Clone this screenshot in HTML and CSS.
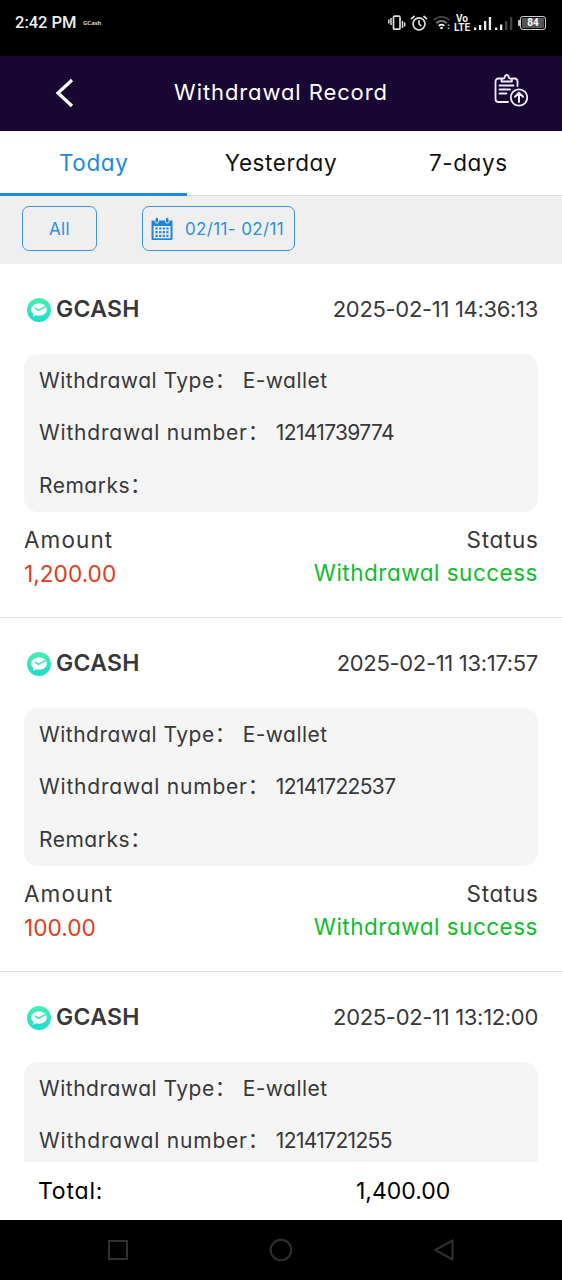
FILE: index.html
```html
<!DOCTYPE html>
<html lang="en">
<head>
    <meta charset="UTF-8">
    <meta name="viewport" content="width=device-width, initial-scale=1.0">
    <title>Withdrawal Record</title>
    <link rel="stylesheet" href="styles.css">
</head>
<body>
    <svg class="defs" width="0" height="0" aria-hidden="true">
        <defs>
            <linearGradient id="mint" x1="0" y1="0" x2="0" y2="1">
                <stop offset="0" stop-color="#45f0b0"/>
                <stop offset="1" stop-color="#1fdccb"/>
            </linearGradient>
            <symbol id="wallet" viewBox="0 0 26 26">
                <circle cx="13" cy="13" r="12" fill="url(#mint)"/>
                <path d="M13 6.500c4.400 0 7.800 2.500 7.800 6s-3.400 6.200-7.800 6.200c-1.100 0-2-.1-2.900-.4L7 19.700l.5-2.700c-1.500-1.100-2.300-2.700-2.300-4.500 0-3.500 3.400-6 7.800-6z" fill="#fff"/>
                <path d="M9 10.800l3.300 2.500 7.500-4" fill="none" stroke="#37e4b9" stroke-width="1.500"/>
            </symbol>
        </defs>
    </svg>

    <div class="statusbar">
        <span class="clock">2:42 PM</span>
        <span class="carrier">GCash</span>
        <div class="status-icons">
            <svg class="vibrate" width="18" height="16" viewBox="0 0 18 16" fill="none" stroke="#ddd">
                <rect x="5.500" y="1.200" width="6.500" height="13" rx="1" stroke-width="1.700"/>
                <path d="M.8 4.500v4M3 3v7M14.500 6v7M16.700 7.500v4" stroke-width="1.500"/>
            </svg>
            <svg class="alarm" width="18" height="16" viewBox="0 0 18 16" fill="none" stroke="#ddd" stroke-width="1.700">
                <circle cx="9" cy="8.800" r="6"/>
                <path d="M9 5.300V9l2.300 2.200M1 4.200L4.500 1M17 4.200L13.500 1"/>
            </svg>
            <svg class="wifi" width="18" height="16" viewBox="0 0 18 16" fill="none" stroke-width="1.700">
                <path d="M.8 5.200c4.300-4.500 11.200-4.500 15.500 0" stroke="#444"/>
                <path d="M3.300 8.200c3-3 7.600-3 10.500 0" stroke="#888"/>
                <path d="M5.800 10.800c1.700-1.500 3.800-1.500 5.500 0" stroke="#fff"/>
                <circle cx="8.500" cy="13" r="1.300" fill="#fff"/>
                <path d="M15.500 9.500v1.500M15.500 12.500v1.500" stroke="#aaa"/>
            </svg>
            <span class="volte"><span>Vo</span><span>LTE</span></span>
            <svg class="signal" width="40" height="16" viewBox="0 0 40 16">
                <path d="M1 12.500h2.300V15H1zM6 10h2.300v5H6zM11 6h2.300v9H11zM15.800 2h2.300v13h-2.300zM22 12.500h2.300V15H22zM27 9.500h2.300V15H27z" fill="#eee"/>
                <path d="M32 6h2.300v9H32zM37 2h2.300v13H37z" fill="#444"/>
            </svg>
            <span class="battery-tip"></span>
            <span class="battery">84</span>
        </div>
    </div>

    <div class="header">
        <svg class="back" width="20" height="30" viewBox="0 0 20 30" fill="none" stroke="#fff" stroke-width="3.200">
            <path d="M17 2L3 15l14 13"/>
        </svg>
        <h1 class="header-title">Withdrawal Record</h1>
        <svg class="clipboard" width="34" height="34" viewBox="0 0 34 34" fill="none" stroke="#f2eaff" stroke-width="1.800" stroke-linejoin="round" stroke-linecap="round">
            <path d="M8 5.500H4.500a3 3 0 0 0-3 3V26a3 3 0 0 0 3 3h9.500M18 5.500h2.500a3 3 0 0 1 3 3v4.500"/>
            <path d="M7.500 8.500V6.200l2.800-1c.4-2 1.200-3.400 2.400-3.400s2 1.400 2.400 3.400l2.800 1v2.300z"/>
            <path d="M5.500 12.500h14M5.500 16.500h10.500M5.500 20.500h7"/>
            <circle cx="25" cy="24.500" r="8.200"/>
            <path d="M25 29v-9M21 23.800l4-4 4 4" stroke-width="2"/>
        </svg>
    </div>

    <div class="tabs">
        <div class="tab active">Today</div>
        <div class="tab yesterday">Yesterday</div>
        <div class="tab week">7-days</div>
    </div>

    <div class="filters">
        <button class="filter-btn filter-all">All</button>
        <button class="filter-btn filter-date">
            <svg width="22" height="24" viewBox="0 0 22 24">
                <path d="M.5 3.500h21v18.500a1 1 0 0 1-1 1h-19a1 1 0 0 1-1-1z" fill="#1f86dc"/>
                <path d="M2.500 9h17v12.300h-17z" fill="#efefef"/>
                <rect x="4" y=".5" width="3.500" height="5.500" rx="1.500" fill="#1f86dc" stroke="#efefef"/>
                <rect x="14.500" y=".5" width="3.500" height="5.500" rx="1.500" fill="#1f86dc" stroke="#efefef"/>
                <path d="M4.500 11.500h13M4.500 15.200h13M4.500 18.900h13" stroke="#1f86dc" stroke-width="2.200" stroke-dasharray="2.200 1.400"/>
            </svg>
            <span>02/11- 02/11</span>
        </button>
    </div>

    <div class="record-list">
        <div class="record">
            <div class="record-head">
                <svg class="wallet" width="26" height="26"><use href="#wallet"/></svg>
                <span class="record-name">GCASH</span>
                <span class="record-time">2025-02-11 14:36:13</span>
            </div>
            <div class="record-box">
                <div class="field"><span class="label">Withdrawal Type</span><span class="colon">：</span><span class="type">E-wallet</span></div>
                <div class="field"><span class="label label-number">Withdrawal number</span><span class="colon">：</span><span class="number">12141739774</span></div>
                <div class="field"><span class="label">Remarks</span><span class="colon">：</span></div>
            </div>
            <div class="record-row"><span class="amount-label">Amount</span><span class="status-label">Status</span></div>
            <div class="record-row values"><span class="amount">1,200.00</span><span class="success">Withdrawal success</span></div>
        </div>

        <div class="record">
            <div class="record-head">
                <svg class="wallet" width="26" height="26"><use href="#wallet"/></svg>
                <span class="record-name">GCASH</span>
                <span class="record-time">2025-02-11 13:17:57</span>
            </div>
            <div class="record-box">
                <div class="field"><span class="label">Withdrawal Type</span><span class="colon">：</span><span class="type">E-wallet</span></div>
                <div class="field"><span class="label label-number">Withdrawal number</span><span class="colon">：</span><span class="number">12141722537</span></div>
                <div class="field"><span class="label">Remarks</span><span class="colon">：</span></div>
            </div>
            <div class="record-row"><span class="amount-label">Amount</span><span class="status-label">Status</span></div>
            <div class="record-row values"><span class="amount">100.00</span><span class="success">Withdrawal success</span></div>
        </div>

        <div class="record">
            <div class="record-head">
                <svg class="wallet" width="26" height="26"><use href="#wallet"/></svg>
                <span class="record-name">GCASH</span>
                <span class="record-time">2025-02-11 13:12:00</span>
            </div>
            <div class="record-box">
                <div class="field"><span class="label">Withdrawal Type</span><span class="colon">：</span><span class="type">E-wallet</span></div>
                <div class="field"><span class="label label-number">Withdrawal number</span><span class="colon">：</span><span class="number">12141721255</span></div>
            </div>
        </div>
    </div>

    <div class="total">
        <span class="total-label">Total:</span>
        <span class="total-value">1,400.00</span>
    </div>

    <div class="navbar">
        <svg width="22" height="22" viewBox="0 0 22 22"><rect x="2" y="2" width="18" height="18"/></svg>
        <svg width="24" height="24" viewBox="0 0 24 24"><circle cx="12" cy="12" r="10.300"/></svg>
        <svg width="22" height="22" viewBox="0 0 22 22"><path d="M19.500 1.500v19L2 11z"/></svg>
    </div>
</body>
</html>
```
FILE: styles.css
```css
* {
    box-sizing: border-box;
}

body {
    margin: 0;
    height: 1280px;
    display: flex;
    flex-direction: column;
    font-family: Inter, "Noto Sans CJK SC", sans-serif;
    font-feature-settings: "cv11";
    font-size: 22px;
    color: #38383a;
    background: #fff;
    overflow: hidden;
    white-space: nowrap;
}

svg {
    display: block;
    flex: none;
}

.defs {
    position: absolute;
}

.statusbar {
    height: 56px;
    flex: none;
    display: flex;
    align-items: center;
    padding: 0 15px 11px;
    background: #000;
    color: #eee;
}

.clock {
    width: 68px;
    font-family: Roboto, sans-serif;
    font-size: 16.5px;
    font-weight: 500;
}

.carrier {
    font-family: "Open Sans", sans-serif;
    font-size: 6px;
    font-weight: 600;
}

.status-icons {
    display: flex;
    align-items: center;
    margin-left: auto;
}

.alarm {
    margin-left: 4px;
}

.wifi {
    margin-left: 5px;
}

.volte {
    display: flex;
    flex-direction: column;
    align-items: center;
    width: 18px;
    margin: 0 2px 0 2px;
    font-family: Roboto, sans-serif;
    font-size: 10px;
    font-weight: 700;
    line-height: 9px;
}

.battery-tip {
    width: 2px;
    height: 6px;
    margin-left: 5px;
    border-radius: 1px 0 0 1px;
    background: #ccc;
}

.battery {
    width: 26px;
    height: 14px;
    margin-right: 1px;
    border: 1px solid #ccc;
    border-radius: 3px;
    background: #555;
    box-shadow: inset 0 0 0 1px #000;
    color: #fff;
    font-family: Roboto, sans-serif;
    font-size: 10px;
    font-weight: 700;
    line-height: 12px;
    text-align: center;
}

.header {
    height: 75px;
    flex: none;
    display: grid;
    grid-template-columns: 120px 1fr 120px;
    align-items: center;
    background: #180733;
    color: #fff;
}

.back {
    margin: -1px 0 0 55px;
}

.header-title {
    margin: -3px 0 0;
    font-size: 22px;
    font-weight: 400;
    letter-spacing: 0.9px;
    text-align: center;
}

.clipboard {
    margin: -7px 0 0 52px;
}

.tabs {
    height: 65px;
    flex: none;
    display: grid;
    grid-template-columns: repeat(3, 1fr);
    border-bottom: 1px solid #ddd;
    color: #111;
}

.tab {
    height: 65px;
    padding-bottom: 2px;
    line-height: 63px;
    font-size: 22.5px;
    letter-spacing: 0.6px;
    text-align: center;
}

.tab.active {
    color: #2089dc;
    border-bottom: 3px solid #2089dc;
}

.filters {
    height: 68px;
    flex: none;
    display: flex;
    align-items: flex-start;
    gap: 45px;
    padding: 10px 22px;
    background: #efefef;
}

.filter-btn {
    height: 45px;
    display: flex;
    align-items: center;
    justify-content: center;
    border: 1px solid #3b93db;
    border-radius: 7px;
    background: transparent;
    color: #2f8fde;
    font: inherit;
    font-size: 17px;
}

.filter-all {
    width: 75px;
    letter-spacing: 0.4px;
}

.filter-date {
    width: 153px;
    gap: 12px;
    padding: 0 2px 0 0;
    letter-spacing: 0.35px;
}

.record-list {
    height: 898px;
    flex: none;
    overflow: hidden;
}

.record {
    height: 354px;
    padding: 0 24px;
    border-bottom: 1px solid #e0e0e0;
}

.record-head {
    height: 90px;
    display: flex;
    align-items: center;
    padding: 1px 0 0 2px;
}

.record-name {
    margin: -2px 0 0 4px;
    font-size: 23px;
    font-weight: 600;
    letter-spacing: 0.3px;
}

.record-time {
    margin: -1px 0 0 auto;
    letter-spacing: -0.32px;
}

.record-box {
    height: 158px;
    padding-left: 15px;
    border-radius: 14px;
    background: #f5f5f5;
}

.field {
    height: 52.500px;
    display: flex;
    align-items: center;
    font-size: 21px;
}

.label {
    letter-spacing: 0.5px;
}

.label-number {
    letter-spacing: 0.8px;
}

.colon {
    width: 28px;
    padding-bottom: 5px;
    font-family: "Noto Sans CJK SC", sans-serif;
}

.type {
    letter-spacing: 0.45px;
}

.number {
    letter-spacing: -0.65px;
}

.record-row {
    height: 34px;
    display: flex;
    align-items: center;
    justify-content: space-between;
    margin-top: 10px;
}

.record-row.values {
    margin-top: 0;
}

.amount-label {
    font-size: 22.5px;
    letter-spacing: 1.1px;
}

.status-label {
    margin-right: -0.7px;
    font-size: 22.5px;
    letter-spacing: 0.7px;
}

.amount {
    font-size: 22.7px;
    color: #e03c20;
}

.success {
    margin-top: -2px;
    font-size: 22.5px;
    color: #0fbc2e;
    letter-spacing: 0.5px;
}

.total {
    height: 58px;
    flex: none;
    display: grid;
    grid-template-columns: 318px 1fr;
    align-items: center;
    padding-left: 38px;
    background: #fff;
    color: #000;
    font-size: 23px;
}

.total-label {
    letter-spacing: 0.8px;
}

.navbar {
    height: 60px;
    flex: none;
    display: flex;
    align-items: center;
    justify-content: space-between;
    padding: 0 107px;
    background: #000;
}

.navbar svg {
    fill: none;
    stroke: #303030;
    stroke-width: 2;
}
```
